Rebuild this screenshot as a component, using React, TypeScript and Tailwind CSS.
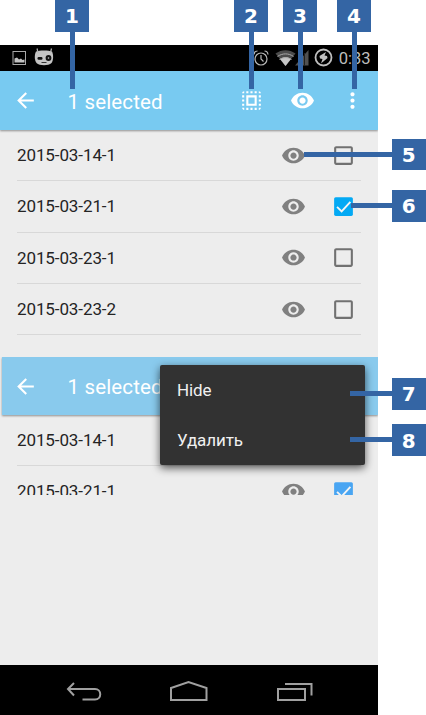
import React from "react";

const FONT = "font-['Roboto','Noto_Sans',sans-serif]";

type IconProps = { d: string; className?: string };

function Icon({ d, className = "" }: IconProps) {
  return (
    <svg viewBox="0 0 24 24" className={`h-[25px] w-[25px] shrink-0 ${className}`} fill="currentColor">
      <path d={d} />
    </svg>
  );
}

const BACK = "M20 11H7.83l5.59-5.59L12 4l-8 8 8 8 1.41-1.41L7.83 13H20v-2z";
const EYE =
  "M12 4.5C7 4.5 2.73 7.61 1 12c1.73 4.39 6 7.5 11 7.5s9.27-3.11 11-7.5c-1.73-4.39-6-7.5-11-7.5zM12 17c-2.76 0-5-2.24-5-5s2.24-5 5-5 5 2.24 5 5-2.24 5-5 5zm0-8c-1.66 0-3 1.34-3 3s1.34 3 3 3 3-1.34 3-3-1.34-3-3-3z";
const MORE =
  "M12 8c1.1 0 2-.9 2-2s-.9-2-2-2-2 .9-2 2 .9 2 2 2zm0 2c-1.1 0-2 .9-2 2s.9 2 2 2 2-.9 2-2-.9-2-2-2zm0 6c-1.1 0-2 .9-2 2s.9 2 2 2 2-.9 2-2-.9-2-2-2z";
const SELECT_ALL =
  "M3 5h2V3c-1.1 0-2 .9-2 2zm0 8h2v-2H3v2zm4 8h2v-2H7v2zM3 9h2V7H3v2zm10-6h-2v2h2V3zm6 0v2h2c0-1.1-.9-2-2-2zM5 21v-2H3c0 1.1.9 2 2 2zm-2-4h2v-2H3v2zM9 3H7v2h2V3zm2 18h2v-2h-2v2zm8-8h2v-2h-2v2zm0 8c1.1 0 2-.9 2-2h-2v2zm0-12h2V7h-2v2zm0 8h2v-2h-2v2zm-4 4h2v-2h-2v2zm0-16h2V3h-2v2zM7 17h10V7H7v10zm2-8h6v6H9V9z";
const BOX =
  "M19 5v14H5V5h14m0-2H5c-1.1 0-2 .9-2 2v14c0 1.1.9 2 2 2h14c1.1 0 2-.9 2-2V5c0-1.1-.9-2-2-2z";

function Check({ checked, soft }: { checked?: boolean; soft?: boolean }) {
  if (!checked) return <Icon d={BOX} className="text-[#717171]" />;
  return (
    <svg viewBox="0 0 24 24" className="h-[25px] w-[25px] shrink-0">
      <rect x="3" y="3" width="18" height="18" rx="1.5" fill={soft ? "#49a5f2" : "#03a9f4"} />
      <path d="M5.8 12.3l4.4 4.4 8.4-9.2" fill="none" stroke="#f4f4f4" strokeWidth="1.8" />
    </svg>
  );
}

function Row({ label, checked, soft }: { label: string; checked?: boolean; soft?: boolean }) {
  return (
    <div className="ml-[17px] mr-[17px] flex h-[51.3px] shrink-0 items-center border-b border-[#d8d8d8]">
      <span className="w-[264px] whitespace-nowrap pt-[1.5px] text-[17px] tracking-[-0.1px] text-[#242424]">
        {label}
      </span>
      <Icon d={EYE} className="text-[#808080]" />
      <span className="ml-[25.3px] flex">
        <Check checked={checked} soft={soft} />
      </span>
    </div>
  );
}

function StatusBar() {
  return (
    <div className="flex h-[26px] items-center bg-black text-[#bdbdbd]">
      <svg viewBox="0 0 378 26" className="h-[26px] w-[378px] shrink-0" fill="none">
        <rect x="13" y="6.5" width="12.5" height="13" stroke="#a9a9a9" />
        <path d="M14.500 17.500v-4l2.500-1 2 2 2-1 1.500 1.500 2-.5v3z" fill="#c4c4c4" />
        <path d="M36 6.500c3-1.500 13-1.500 16 0 1.600 3 1.500 9-.5 11.500-3 3-12 3-15 0-2.300-3-2.100-8.500-.5-11.500z" fill="#c4c4c4" />
        <path d="M38 7.500l-1-4M50.500 7.500l1-4" stroke="#b5b5b5" strokeWidth="1.200" />
        <rect x="37.500" y="12" width="5" height="2.800" rx="1.200" fill="#111" />
        <circle cx="48.500" cy="13" r="2.900" fill="#111" />
        <circle cx="48.500" cy="13" r=".8" fill="#ccc" />
        <path d="M41.500 17.500h5" stroke="#333" />
        <g stroke="#b8b8b8" strokeWidth="1.200">
          <circle cx="261" cy="14" r="6" />
          <path d="M261 10v4l2.500 2.500M254 9.500c.2-2 1.500-3.500 3.500-3.500M268 9.500c-.2-2-1.500-3.500-3.500-3.500" />
        </g>
        <path d="M275.500 8.500c6-4.500 14-4.500 20 0L285.500 21z" fill="#4c4c4c" />
        <path d="M280 14c3.500-2.500 8-2.500 11 0l-5.500 7z" fill="#c6c6c6" />
        <path d="M277.500 11.500c5-3.500 11-3.500 16 0M279.500 14.500c4-2.500 8-2.500 12 0" stroke="#a8a8a8" />
        <path d="M295 20.500L308.500 5v15.500z" fill="#505050" />
        <path d="M304.500 8v13" stroke="#222" />
        <circle cx="323.500" cy="12.500" r="8" stroke="#c0c0c0" strokeWidth="1.800" />
        <path d="M326 7l-6.500 4 .5 2.500 2.500.5-1.500 4.500 6.500-5.500-.5-2-2.500-.5z" fill="#c0c0c0" />
        <text x="338.700" y="19.300" fill="#bdbdbd" fontSize="17" textLength="32" lengthAdjust="spacingAndGlyphs" fontFamily="Roboto">
          0:33
        </text>
      </svg>
    </div>
  );
}

function AppBar({ second }: { second?: boolean }) {
  return (
    <div
      className={`relative flex shrink-0 items-center text-white shadow-[0_1px_2px_rgba(0,0,0,0.4)] ${
        second ? "ml-0.5 h-[58px] bg-[#89caed] pl-[11px]" : "h-[59px] bg-[#78caf1] pl-[13px]"
      }`}
    >
      <Icon d={BACK} />
      <span
        className={`ml-[29.5px] w-[171px] whitespace-nowrap text-[20.5px] tracking-[0.15px] ${
          second ? "pt-[2px]" : "pt-[3px]"
        }`}
      >
        1 selected
      </span>
      {!second && (
        <>
          <Icon d={SELECT_ALL} className="ml-[0.5px]" />
          <Icon d={EYE} className="ml-[25.5px]" />
          <Icon d={MORE} className="ml-[25px]" />
        </>
      )}
    </div>
  );
}

function NavBar() {
  return (
    <div className="h-[50px] shrink-0 bg-black">
      <svg viewBox="0 0 378 50" className="h-[50px] w-[378px]" fill="none" stroke="#a0a0a0" strokeWidth="2">
        <path d="M68 24h27c7 0 7 10.500 0 10.500H82.500M74 18l-6 6 6 6.500" />
        <path d="M171 35V23l17.500-6 18 6v12z" />
        <path d="M278 24h27v11h-27zM285 19h26.500v11.500" />
      </svg>
    </div>
  );
}

const BADGE =
  "absolute flex items-center justify-center bg-[#3465a4] pt-px font-['DejaVu_Sans',sans-serif] text-[20px] font-bold leading-none text-white";

const TOP_MARKS = [
  { n: 1, x: 55 },
  { n: 2, x: 234 },
  { n: 3, x: 283 },
  { n: 4, x: 337 },
];

const SIDE_MARKS = [
  { n: 5, y: 138.5, from: 304 },
  { n: 6, y: 190, from: 351 },
  { n: 7, y: 378, from: 350 },
  { n: 8, y: 424.3, from: 350 },
];

export default function App() {
  return (
    <div className={`relative h-[715px] w-[426px] overflow-hidden bg-white pt-[45px] ${FONT}`}>
      <div className="flex h-[670px] w-[377.5px] flex-col overflow-hidden bg-[#ededed]">
        <StatusBar />
        <AppBar />
        <div className="flex h-[227px] shrink-0 flex-col">
          <Row label="2015-03-14-1" />
          <Row label="2015-03-21-1" checked />
          <Row label="2015-03-23-1" />
          <Row label="2015-03-23-2" />
        </div>
        <div className="relative flex h-[138px] shrink-0 flex-col">
          <div className="flex h-[138px] flex-col overflow-hidden">
            <AppBar second />
            <Row label="2015-03-14-1" soft />
            <Row label="2015-03-21-1" checked soft />
          </div>
          <div className="absolute left-[160px] top-2 flex h-[100px] w-[205px] flex-col rounded-[2px] bg-[#323232] pl-[17px] text-[17px] tracking-[-0.1px] text-[#f0f0f0] shadow-[0_3px_8px_rgba(0,0,0,0.65)]">
            <span className="flex h-[50px] items-center pt-[2px]">Hide</span>
            <span className="flex h-[50px] items-center pt-[2px]">Удалить</span>
          </div>
        </div>
        <div className="grow" />
        <NavBar />
      </div>

      {TOP_MARKS.map((m) => (
        <div key={m.n} className="absolute top-0" style={{ left: m.x }}>
          <div className={`${BADGE} left-0 top-0 h-[31.5px] w-[34px]`}>{m.n}</div>
          <div className="ml-[15px] h-[89px] w-[5px] bg-[#3465a4]" />
        </div>
      ))}
      {SIDE_MARKS.map((m) => (
        <div key={m.n} className="absolute right-0" style={{ top: m.y, left: m.from }}>
          <div className="mt-[13px] h-[5px] bg-[#3465a4]" />
          <div className={`${BADGE} right-0 top-0 h-[31.5px] w-[34.5px]`}>{m.n}</div>
        </div>
      ))}
    </div>
  );
}
